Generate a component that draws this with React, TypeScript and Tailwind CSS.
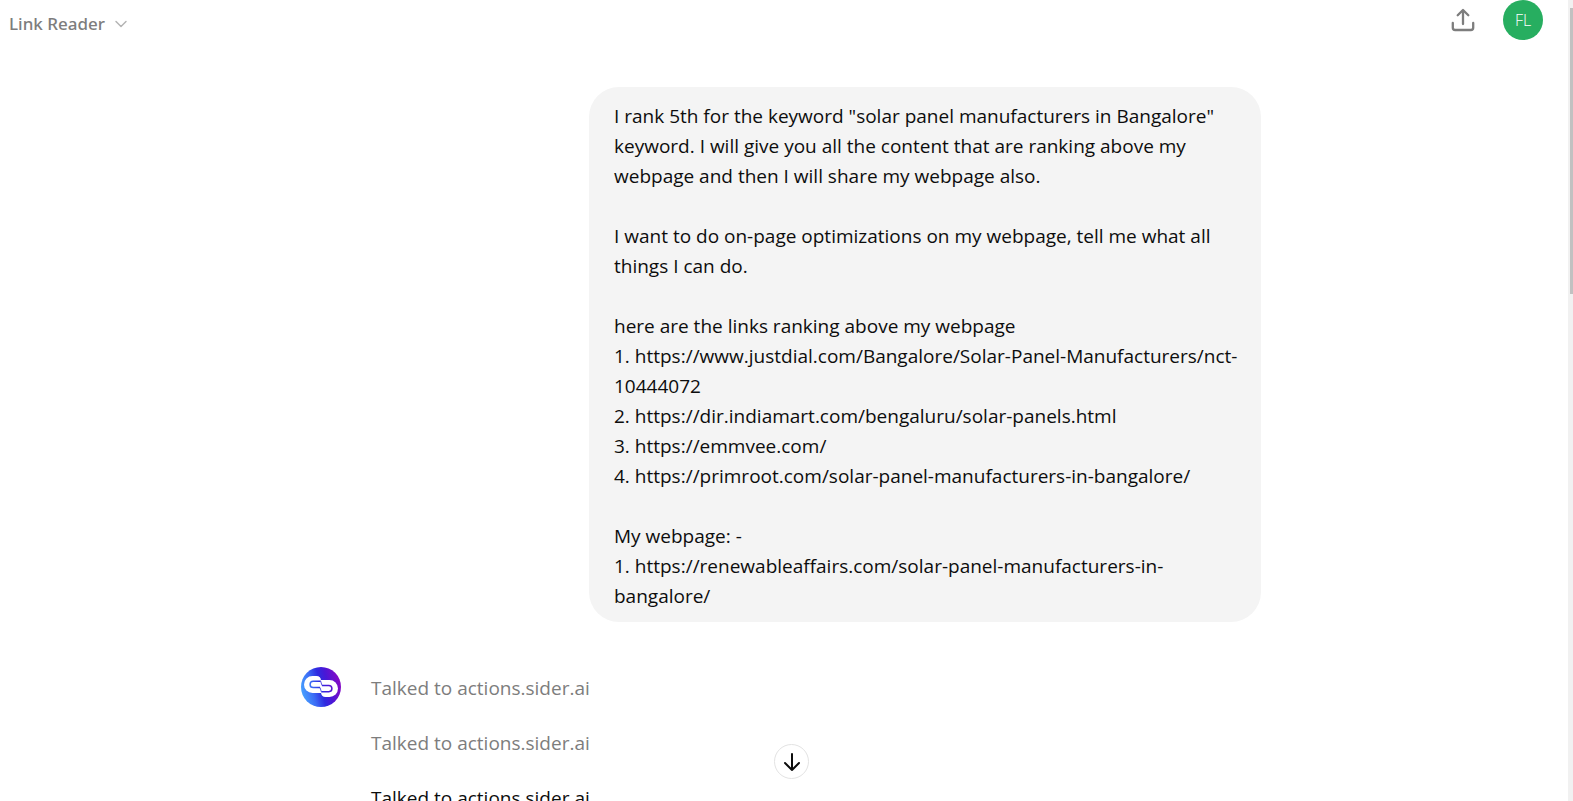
import { ChevronDown } from "lucide-react";

const message = `I rank 5th for the keyword "solar panel manufacturers in Bangalore" keyword. I will give you all the content that are ranking above my webpage and then I will share my webpage also.

I want to do on-page optimizations on my webpage, tell me what all things I can do.

here are the links ranking above my webpage
1. https://www.justdial.com/Bangalore/Solar-Panel-Manufacturers/nct-10444072
2. https://dir.indiamart.com/bengaluru/solar-panels.html
3. https://emmvee.com/
4. https://primroot.com/solar-panel-manufacturers-in-bangalore/

My webpage: -
1. https://renewableaffairs.com/solar-panel-manufacturers-in-bangalore/`;

const actions = [
  { id: 1, label: "Talked to actions.sider.ai", active: false },
  { id: 2, label: "Talked to actions.sider.ai", active: false },
  { id: 3, label: "Talked to actions.sider.ai", active: true },
];

function ShareIcon() {
  return (
    <svg
      width="24"
      height="24"
      viewBox="0 0 24 24"
      fill="none"
      stroke="currentColor"
      strokeWidth="2.3"
      strokeLinecap="round"
      strokeLinejoin="round"
      aria-hidden="true"
    >
      <path d="M12 16V2.500M6.700 7.300 12 2l5.300 5.300" />
      <path d="M1.800 15v4.700a2.300 2.300 0 0 0 2.300 2.300h15.800a2.300 2.300 0 0 0 2.300-2.300V15" />
    </svg>
  );
}

function LinkReaderLogo() {
  return (
    <svg
      width="40"
      height="40"
      viewBox="0 0 40 40"
      className="shrink-0"
      aria-hidden="true"
    >
      <defs>
        <linearGradient
          id="logo-bg"
          gradientUnits="userSpaceOnUse"
          x1="0"
          y1="25"
          x2="40"
          y2="15"
        >
          <stop offset="0" stopColor="#47a3ff" />
          <stop offset="0.28" stopColor="#3c6cf5" />
          <stop offset="0.5" stopColor="#2f2be0" />
          <stop offset="0.68" stopColor="#4a17d6" />
          <stop offset="1" stopColor="#8a08c4" />
        </linearGradient>
      </defs>
      <circle cx="20" cy="20" r="20" fill="url(#logo-bg)" />
      <g fill="#fff">
        <path d="M11.500 9h4c2.800 0 4.500 1.800 4.500 4.500V26h-8.500a8.500 8.500 0 0 1 0-17Z" />
        <path d="M20 13h8.500a8.500 8.500 0 0 1 0 17h-4c-2.800 0-4.500-1.800-4.500-4.500Z" />
      </g>
      <g fill="none" stroke="url(#logo-bg)" strokeWidth="1.500">
        <path d="M19.500 14.300h-7.300a3.100 3.100 0 0 0 0 6.200H19" />
        <path d="M20.500 24.700h7.300a3.100 3.100 0 0 0 0-6.200H21" />
      </g>
      <path
        d="m19.500 13.700 1.500 4.800M19 20.500l1.500 4.800"
        fill="none"
        stroke="url(#logo-bg)"
        strokeWidth="0.800"
      />
    </svg>
  );
}

function Header() {
  return (
    <header className="flex h-12 shrink-0 items-start justify-between pl-[9px] pr-[25px]">
      <button
        type="button"
        className="flex h-12 items-center gap-1.5 font-['Noto_Sans',sans-serif] text-[17px] font-medium text-[#7d7d7d]"
      >
        Link Reader
        <ChevronDown size={20} strokeWidth={1.75} className="text-[#b4b4b4]" />
      </button>
      <div className="flex items-center gap-7">
        <button type="button" aria-label="Share" className="text-[#7d7d7d]">
          <ShareIcon />
        </button>
        <button
          type="button"
          className="flex size-10 items-center justify-center rounded-full bg-[#27ae60] text-[16px] font-light text-white"
        >
          FL
        </button>
      </div>
    </header>
  );
}

export default function App() {
  return (
    <div className="relative flex h-screen overflow-hidden bg-white font-['Open_Sans',sans-serif] text-[#0d0d0d]">
      <div className="flex min-w-0 flex-1 flex-col">
        <Header />
        <main className="min-h-0 flex-1 overflow-hidden pr-[6px] pt-[39px]">
          <div className="mx-auto flex max-w-[960px] flex-col">
            <div className="w-[70%] self-end whitespace-pre-wrap rounded-[30px] bg-[#f4f4f4] pb-[11px] pl-[25px] pr-[12px] pt-[14px] text-[19px] leading-[30px]">
              {message}
            </div>
            <div className="mt-[45px] flex gap-[30px]">
              <LinkReaderLogo />
              <div className="flex flex-col gap-[25px] pt-[6px] text-[19px] leading-[30px]">
                {actions.map((action) => (
                  <p
                    key={action.id}
                    className={action.active ? "" : "text-[#7d7d7d]"}
                  >
                    {action.label}
                  </p>
                ))}
              </div>
            </div>
          </div>
        </main>
      </div>

      <div className="w-[5px] shrink-0 bg-[#f1f1f1] pl-[2px] pt-2">
        <div className="h-[286px] bg-[#c1c1c1]" />
      </div>

      <div className="pointer-events-none absolute inset-x-0 bottom-[22px] flex justify-center pl-[10px]">
        <button
          type="button"
          aria-label="Scroll to bottom"
          className="pointer-events-auto flex size-[35px] items-center justify-center rounded-full border border-[#e3e3e3] bg-white"
        >
          <svg
            width="18"
            height="18"
            viewBox="0 0 18 18"
            fill="none"
            stroke="currentColor"
            strokeWidth="2"
            strokeLinecap="round"
            strokeLinejoin="round"
            aria-hidden="true"
          >
            <path d="M9 1v16M2 10l7 7 7-7" />
          </svg>
        </button>
      </div>
    </div>
  );
}
